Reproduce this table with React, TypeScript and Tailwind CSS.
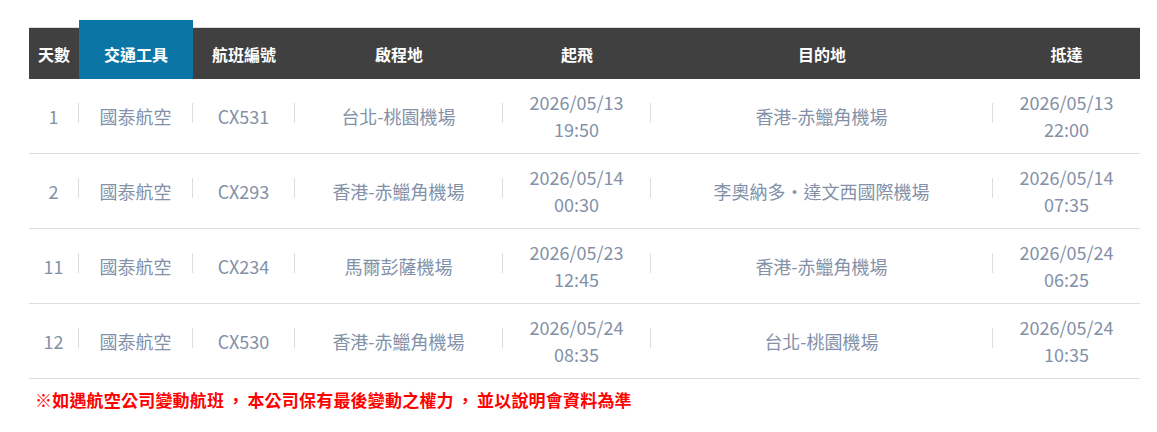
import React from "react";

const widthCls = ["w-[49px]", "w-[113px]", "w-[101px]", "w-[207px]", "w-[147px]", "w-[341px]", "w-[147px]"];
const headWidthCls = ["w-[50px]", "w-[114px]", "w-[102px]", "w-[208px]", "w-[148px]", "w-[342px]", "w-[147px]"];

const headers = ["天數", "交通工具", "航班編號", "啟程地", "起飛", "目的地", "抵達"];

const rows: string[][] = [
  ["1", "國泰航空", "CX531", "台北-桃園機場", "2026/05/13\n19:50", "香港-赤鱲角機場", "2026/05/13\n22:00"],
  ["2", "國泰航空", "CX293", "香港-赤鱲角機場", "2026/05/14\n00:30", "李奧納多・達文西國際機場", "2026/05/14\n07:35"],
  ["11", "國泰航空", "CX234", "馬爾彭薩機場", "2026/05/23\n12:45", "香港-赤鱲角機場", "2026/05/24\n06:25"],
  ["12", "國泰航空", "CX530", "香港-赤鱲角機場", "2026/05/24\n08:35", "台北-桃園機場", "2026/05/24\n10:35"],
];

export default function App() {
  return (
    <div
      className="w-[1157px] h-[432px] bg-white pt-[20px] pl-[29px]"
      style={{ fontFamily: '"Noto Sans CJK TC", "Noto Sans", sans-serif' }}
    >
      <div className="w-[1111px]">
        {/* header */}
        <div className="flex items-end h-[59px]">
          {headers.map((h, i) => {
            const active = i === 1;
            const w = headWidthCls[i];
            return (
              <div
                key={h}
                className={
                  active
                    ? `${w} h-[59px] bg-[#0b76a6] flex items-center justify-center pt-[8px] text-white font-bold text-[16px]`
                    : `${w} h-[52px] bg-[#404040] border-t border-[#dcdcdc] flex items-center justify-center text-white font-bold text-[16px]`
                }
              >
                {h}
              </div>
            );
          })}
        </div>
        {/* body */}
        {rows.map((r, ri) => (
          <div key={ri} className="flex h-[75px] border-b border-[#dddddd]">
            {r.map((c, ci) => (
              <React.Fragment key={ci}>
                <div
                  className={`${widthCls[ci]} flex flex-col items-center justify-center text-[18px] leading-[27px] text-[#8391a8] text-center`}
                >
                  {c.split("\n").map((l, li) => (
                    <div key={li}>{l}</div>
                  ))}
                </div>
                {ci < 6 && <div className="w-px h-[20px] mt-[24px] bg-[#dddddd]" />}
              </React.Fragment>
            ))}
          </div>
        ))}
        <div className="mt-[8px] pl-[6px] text-[17px] leading-[26px] font-bold text-[#ff0000] tracking-[0.2px]">
          ※如遇航空公司變動航班<span className="px-[3px]">，</span>本公司保有最後變動之權力<span className="px-[3px]">，</span>並以說明會資料為準
        </div>
      </div>
    </div>
  );
}
